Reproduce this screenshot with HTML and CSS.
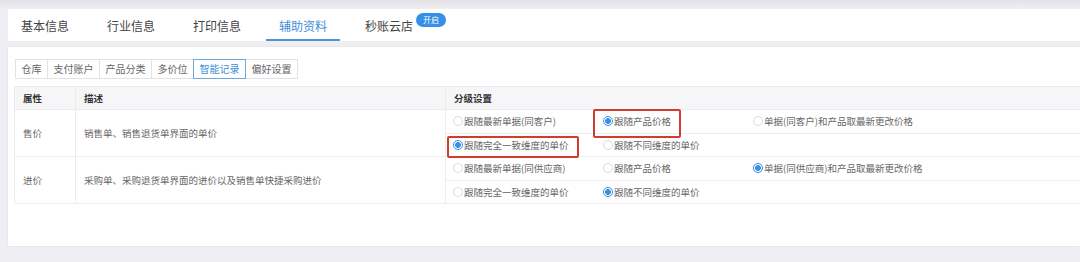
FILE: index.html
```html
<!DOCTYPE html>
<html lang="zh-CN">
<head>
<meta charset="utf-8">
<link rel="stylesheet" href="styles.css">
</head>
<body>
<nav class="tabs">
  <a class="tab">基本信息</a>
  <a class="tab">行业信息</a>
  <a class="tab">打印信息</a>
  <a class="tab active">辅助资料</a>
  <a class="tab">秒账云店<span class="badge">开启</span></a>
</nav>
<section class="card">
  <ul class="subtabs">
    <li class="subtab">仓库</li>
    <li class="subtab">支付账户</li>
    <li class="subtab">产品分类</li>
    <li class="subtab">多价位</li>
    <li class="subtab active">智能记录</li>
    <li class="subtab">偏好设置</li>
  </ul>
  <table class="grid">
    <colgroup><col class="c1"><col class="c2"><col></colgroup>
    <thead>
      <tr><th>属性</th><th>描述</th><th>分级设置</th></tr>
    </thead>
    <tbody>
      <tr>
        <td rowspan="2">售价</td>
        <td rowspan="2">销售单、销售退货单界面的单价</td>
        <td class="opts"><div class="optrow">
          <span class="opt"><i class="radio"></i>跟随最新单据(同客户)</span>
          <span class="opt mark1"><i class="radio on"></i>跟随产品价格</span>
          <span class="opt"><i class="radio"></i>单据(同客户)和产品取最新更改价格</span>
        </div></td>
      </tr>
      <tr>
        <td class="opts"><div class="optrow">
          <span class="opt mark2"><i class="radio on"></i>跟随完全一致维度的单价</span>
          <span class="opt"><i class="radio"></i>跟随不同维度的单价</span>
        </div></td>
      </tr>
      <tr>
        <td rowspan="2">进价</td>
        <td rowspan="2">采购单、采购退货单界面的进价以及销售单快捷采购进价</td>
        <td class="opts"><div class="optrow">
          <span class="opt"><i class="radio"></i>跟随最新单据(同供应商)</span>
          <span class="opt"><i class="radio"></i>跟随产品价格</span>
          <span class="opt"><i class="radio on"></i>单据(同供应商)和产品取最新更改价格</span>
        </div></td>
      </tr>
      <tr>
        <td class="opts"><div class="optrow">
          <span class="opt"><i class="radio"></i>跟随完全一致维度的单价</span>
          <span class="opt"><i class="radio on"></i>跟随不同维度的单价</span>
        </div></td>
      </tr>
    </tbody>
  </table>
</section>
</body>
</html>
```

FILE: styles.css
```css
* { box-sizing: border-box; }

body {
  margin: 0;
  padding-top: 9px;
  height: 262px;
  overflow: hidden;
  background: linear-gradient(#e3e3e7, #efeff3 9px) no-repeat, #efeff3;
  font-family: "Noto Sans CJK SC", "Noto Sans", sans-serif;
}

.tabs {
  margin-left: 8px;
  height: 32px;
  background: #fff;
  display: flex;
  gap: 12px;
  padding-left: 0;
}

.tab {
  position: relative;
  display: flex;
  align-items: center;
  padding: 0 13px;
  font-size: 12px;
  color: #444;
  white-space: nowrap;
}

.tab.active {
  color: #3d8fd6;
  box-shadow: inset 0 -2px 0 #4a97d0;
}

.badge {
  position: absolute;
  left: 64px;
  top: 4px;
  width: 30px;
  height: 14px;
  border-radius: 7px;
  background: #3590e8;
  color: #fff;
  font-size: 8px;
  line-height: 14px;
  text-align: center;
}

.card {
  margin: 6px 0 0 8px;
  height: 199px;
  background: #fff;
  padding: 12px 0 0 6px;
  box-shadow: 0 0 2px rgba(0, 0, 0, 0.08);
}

.subtabs {
  list-style: none;
  margin: 0 0 0 1px;
  padding: 0;
  display: flex;
  height: 20px;
}

.subtab {
  border: 1px solid #e3e3e3;
  margin-left: -1px;
  padding: 0 5.5px;
  font-size: 10px;
  line-height: 18px;
  color: #666;
  background: #fff;
}

.subtab:first-child { margin-left: 0; }

.subtab.active {
  position: relative;
  z-index: 1;
  border-color: #6fa9d8;
  color: #3d8fd6;
}

.grid {
  margin-top: 7px;
  width: 100%;
  border-collapse: collapse;
  font-size: 9.5px;
  color: #666;
}

.c1 { width: 61px; }
.c2 { width: 370px; }

.grid th,
.grid td {
  border: 1px solid #ececec;
  border-right: none;
  text-align: left;
  padding: 0 0 0 8px;
  white-space: nowrap;
}

.grid th {
  height: 23px;
  background: #f6f6f8;
  font-weight: bold;
  color: #333;
}

.grid td { height: 23.5px; }

.grid td.opts { padding-left: 7px; }

.optrow {
  display: flex;
  align-items: center;
}

.opt {
  position: relative;
  display: flex;
  align-items: center;
  flex: none;
  width: 150px;
  height: 12px;
}

.radio {
  width: 10px;
  height: 10px;
  flex: none;
  border: 1px solid #dcdcdc;
  border-radius: 50%;
  margin-right: 1px;
  background: #fff;
}

.radio.on {
  border-color: #3a8ee6;
  background: radial-gradient(circle, #3a8ee6 0 2.6px, #fff 3.2px);
}

.mark1::after,
.mark2::after {
  content: "";
  position: absolute;
  border: 2px solid #d23c2e;
  border-radius: 2px;
}

.mark1::after {
  left: -10.5px;
  top: -6.5px;
  width: 84.5px;
  height: 25px;
}

.mark2::after {
  left: -6px;
  top: -3px;
  width: 128px;
  height: 18px;
}
```
